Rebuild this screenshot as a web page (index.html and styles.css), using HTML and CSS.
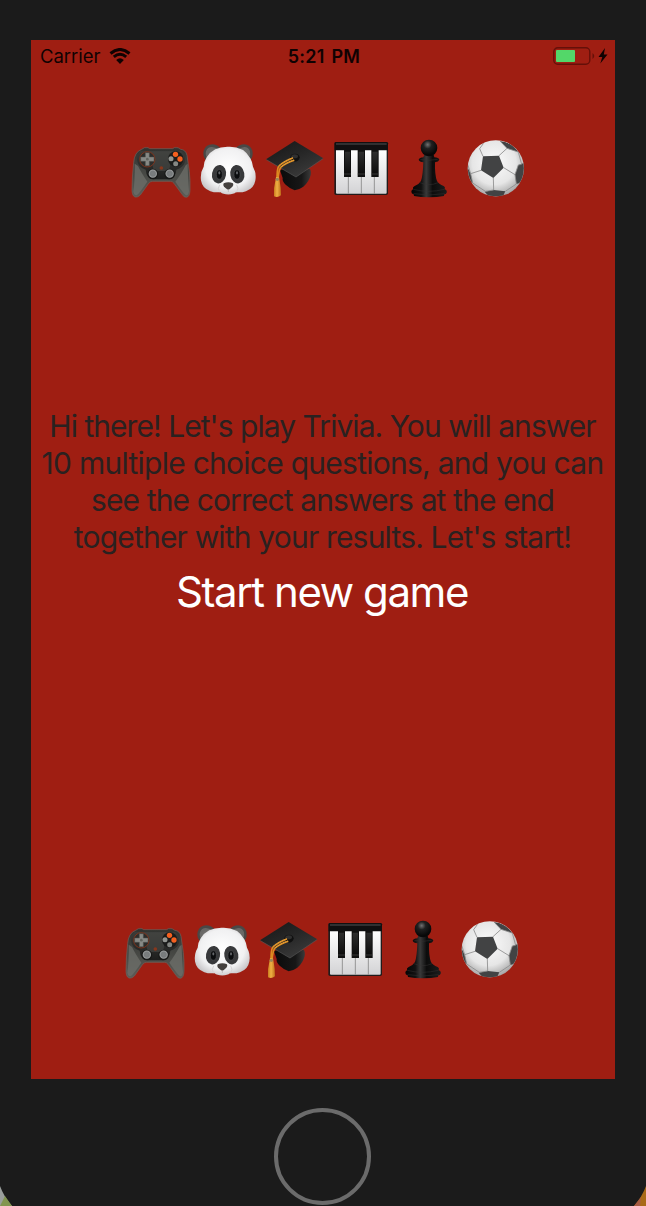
FILE: index.html
```html
<!DOCTYPE html>
<html lang="en">
<head>
<meta charset="utf-8">
<title>Trivia</title>
<link rel="stylesheet" href="styles.css">
</head>
<body>
<svg class="sprites" width="0" height="0" aria-hidden="true">
  <defs>
    <linearGradient id="gBody" x1="0" y1="0" x2="0" y2="1"><stop offset="0" stop-color="#30322f"/><stop offset="1" stop-color="#5c5d58"/></linearGradient>
    <linearGradient id="gPanel" x1="0" y1="0" x2="0" y2="1"><stop offset="0" stop-color="#3b3c39"/><stop offset="1" stop-color="#1d1e1d"/></linearGradient>
    <radialGradient id="gStick"><stop offset="0" stop-color="#7b7f80"/><stop offset=".6" stop-color="#777b7c"/><stop offset="1" stop-color="#a5a8a8"/></radialGradient>
    <radialGradient id="gFace" cx=".5" cy=".45" r=".58"><stop offset="0" stop-color="#fff"/><stop offset=".7" stop-color="#f1f1f2"/><stop offset="1" stop-color="#c8c6c8"/></radialGradient>
    <radialGradient id="gEar"><stop offset="0" stop-color="#8b8986"/><stop offset="1" stop-color="#696866"/></radialGradient>
    <linearGradient id="gCap" x1="0" y1="0" x2=".7" y2="1"><stop offset="0" stop-color="#151515"/><stop offset=".5" stop-color="#262626"/><stop offset="1" stop-color="#3b3b3b"/></linearGradient>
    <linearGradient id="gHat" x1="0" y1="0" x2="1" y2="0"><stop offset="0" stop-color="#0a0a0a"/><stop offset=".7" stop-color="#171717"/><stop offset="1" stop-color="#3a3a3a"/></linearGradient>
    <linearGradient id="gTassel" x1="0" y1="0" x2="1" y2="0"><stop offset="0" stop-color="#c9791a"/><stop offset=".45" stop-color="#efb044"/><stop offset="1" stop-color="#c0701a"/></linearGradient>
    <linearGradient id="gKeys" x1="0" y1="0" x2="0" y2="1"><stop offset="0" stop-color="#fff"/><stop offset="1" stop-color="#d3d3d5"/></linearGradient>
    <linearGradient id="gBlack" x1="0" y1="0" x2="0" y2="1"><stop offset="0" stop-color="#2e2e2e"/><stop offset="1" stop-color="#0d0d0d"/></linearGradient>
    <linearGradient id="gPawn" x1="0" y1="0" x2="1" y2="0"><stop offset="0" stop-color="#050505"/><stop offset=".28" stop-color="#111"/><stop offset=".42" stop-color="#3a3a3a"/><stop offset=".6" stop-color="#0c0c0c"/><stop offset="1" stop-color="#1d1d1d"/></linearGradient>
    <radialGradient id="gHead" cx=".42" cy=".3" r=".6"><stop offset="0" stop-color="#727272"/><stop offset=".4" stop-color="#202020"/><stop offset="1" stop-color="#080808"/></radialGradient>
    <radialGradient id="gBall" cx=".47" cy=".4" r=".6"><stop offset="0" stop-color="#fbfbfb"/><stop offset=".65" stop-color="#e6e6e6"/><stop offset="1" stop-color="#a6a6a6"/></radialGradient>
    <clipPath id="ballClip"><circle cx="287.500" cy="115" r="84"/></clipPath>
  </defs>

  <symbol id="gamepad" viewBox="21 27 201 180">
    <path d="M65 58Q72 51 84 53L89 56H158L163 53Q176 51 182 58Q197 59 201 76L208 125Q211 151 210 181Q209 201 199 202Q191 202 186 193L162 160Q158 154 151 154H98Q91 154 86 160L61 195Q54 203 45 201Q37 198 36 182Q36 142 41 98Q43 66 65 58Z" fill="url(#gBody)" stroke="#6c625c" stroke-width="2"/>
    <path d="M44 101Q45 150 40 185Q43 198 51 195Q59 189 82 155Q63 127 54 108ZM203 101Q204 150 207 184Q205 199 197 195Q190 190 166 155Q181 137 197 106Z" fill="#6c6d68" opacity=".8"/>
    <path d="M62 63H184Q200 77 194 98Q189 112 169 119Q168 143 148 148H100Q79 145 77 119Q53 111 51 89Q51 72 62 63Z" fill="url(#gPanel)"/>
    <path d="M90 64H159L147 123H101Z" fill="#454644" opacity=".65"/>
    <circle cx="82" cy="88" r="23" fill="#2c2d2b" stroke="#8b3519" stroke-width="2.500"/>
    <path d="M76 68H88V81H102V94H88V107H76V94H62V81H76Z" fill="#878985" stroke="#51534f" stroke-width="1.500"/>
    <circle cx="82" cy="87.500" r="4" fill="#62645f"/>
    <circle cx="167" cy="87" r="23" fill="#1b1c1b"/>
    <circle cx="166.500" cy="73" r="8" fill="#f4601f"/><circle cx="180" cy="87" r="8" fill="#f4601f"/>
    <circle cx="153" cy="86.500" r="7.500" fill="#929591"/><circle cx="167" cy="101" r="7.500" fill="#858884"/>
    <circle cx="124" cy="114" r="5.500" fill="#86371d"/>
    <circle cx="98.500" cy="132" r="16" fill="#171817"/><circle cx="149" cy="132" r="16" fill="#171817"/>
    <circle cx="98.500" cy="131" r="12.500" fill="url(#gStick)"/><circle cx="149" cy="131" r="12.500" fill="url(#gStick)"/>
  </symbol>

  <symbol id="panda" viewBox="222 28.5 201 180">
    <path d="M258 93Q247 79 251 64Q256 45 277 44Q291 44 302 56ZM391 93Q401 78 397 63Q391 45 372 44Q358 44 347 56Z" fill="#494846"/>
    <path d="M263 88Q255 77 258 65Q264 51 279 53Q289 54 295 60ZM386 88Q393 77 390 65Q384 51 370 53Q360 54 354 60Z" fill="url(#gEar)"/>
    <path d="M325 52Q370 50 391 86Q397 96 399 112Q410 131 406 153Q402 177 378 185Q364 190 348 188Q341 194 325 195Q308 194 302 188Q285 190 271 185Q247 177 243 153Q240 130 251 112Q252 95 260 83Q281 51 325 52Z" fill="url(#gFace)"/>
    <path d="M299 188Q291 177 299 166M350 188Q358 177 350 166" fill="none" stroke="#d5d3d4" stroke-width="3"/>
    <ellipse cx="297" cy="134" rx="21" ry="28" transform="rotate(10 297 134)" fill="#38393b"/><ellipse cx="352" cy="134" rx="21" ry="28" transform="rotate(-10 352 134)" fill="#38393b"/>
    <ellipse cx="298" cy="135" rx="9" ry="14" fill="#0b0c0e" stroke="#54575a" stroke-width="1.500"/><ellipse cx="351" cy="135" rx="9" ry="14" fill="#0b0c0e" stroke="#54575a" stroke-width="1.500"/>
    <ellipse cx="298" cy="130" rx="3" ry="5" fill="#63666a"/><ellipse cx="351" cy="130" rx="3" ry="5" fill="#63666a"/>
    <path d="M311 161Q325 155 339 161Q342 166 337 172Q328 181 325 181Q322 181 312 172Q308 166 311 161Z" fill="#45413f"/>
    <path d="M325 179V187" stroke="#aaa6a6" stroke-width="2"/>
  </symbol>

  <symbol id="cap" viewBox="3 27 201 180">
    <path d="M60 121Q66 116 80 119L110 126L149 116Q154 121 152 135Q147 156 130 170Q119 178 104 181Q90 176 77 164Q66 154 68 144Z" fill="url(#gHat)"/>
    <path d="M104 33L190 85L108 141L18 88Z" fill="url(#gCap)"/>
    <path d="M19 89L108 141L189 86" fill="none" stroke="#555" stroke-width="2"/>
    <path d="M91 81Q92 71 105 71Q118 72 119 82Q118 94 105 95Q92 93 91 81Z" fill="#101010"/><ellipse cx="104" cy="79" rx="10" ry="6" fill="#303030"/>
    <path d="M99 84Q72 94 56 109Q51 117 51 146M103 91Q76 100 62 112Q57 120 54 145" fill="none" stroke="#dc8a20" stroke-width="5"/>
    <path d="M98 83Q73 92 57 106M102 90Q77 99 63 111" fill="none" stroke="#f5bd53" stroke-width="2" stroke-dasharray="4 2"/>
    <path d="M48 141H57L59 153Q63 172 63 196Q53 204 42 199Q40 174 46 153Z" fill="url(#gTassel)"/>
    <circle cx="52" cy="148" r="5" fill="#9c8657"/>
  </symbol>

  <symbol id="piano" viewBox="204 27 201 180">
    <path d="M227 36H380Q384 36 384 41V190Q384 195 379 195H228Q223 195 223 190V41Q223 36 227 36Z" fill="#211b1b"/>
    <path d="M228 60H380V188Q380 191 377 191H231Q228 191 228 188Z" fill="url(#gKeys)"/>
    <path d="M265 140V191M304 140V191M343 140V191" stroke="#858585" stroke-width="2.500"/>
    <path d="M224 39Q225 36 229 36H378Q383 36 384 40V61H224Z" fill="#101011"/><path d="M228 39H380V45H228Z" fill="#303031"/>
    <path d="M252 60H273V141H252ZM293 60H315V141H293ZM334 60H356V141H334Z" fill="#101010"/>
    <path d="M255 65H270V130H255ZM296 65H312V130H296ZM337 65H353V130H337Z" fill="url(#gBlack)"/>
    <path d="M252 132H273M293 132H315M334 132H356" stroke="#4a4a4a" stroke-width="2"/>
  </symbol>

  <symbol id="pawn" viewBox="-15 27 201 180">
    <path d="M73 74H101L103 82Q117 83 118 89Q116 95 105 97Q104 135 111 153Q116 162 131 168Q137 171 134 178Q142 181 140 188Q138 193 133 193L132 198Q113 202 87 202Q60 202 42 198L41 193Q34 191 34 185Q34 180 39 178Q37 171 44 168Q58 162 63 153Q69 135 70 97Q58 95 56 89Q58 83 70 82Z" fill="url(#gPawn)"/>
    <circle cx="87" cy="54" r="25" fill="url(#gHead)"/>
    <path d="M61 88Q85 94 113 88M60 158Q87 170 114 158M40 178Q85 190 133 178M41 191Q85 199 134 191" fill="none" stroke="#343232" stroke-width="1.500"/>
  </symbol>

  <symbol id="ball" viewBox="186 27 201 180">
    <circle cx="287.500" cy="115" r="84.500" fill="url(#gBall)"/>
    <g clip-path="url(#ballClip)">
      <path d="M249 79L297 77L311 113L280 144L243 121ZM300 34Q332 33 355 66L321 55ZM355 105L372 99V140Q365 158 349 162L345 134ZM201 109L212 131L218 159L201 155ZM254 185L281 180L316 184L308 201H268Z" fill="#424344"/>
      <path d="M203 103L212 131L243 121M212 131L218 159M218 159L256 184L281 180L280 144M249 79L239 56L257 31M297 77L321 55L300 33M321 55L355 66L365 103L355 105L345 134L311 113M345 134L349 162L316 184" fill="none" stroke="#8c8c8c" stroke-width="2.500"/>
    </g>
  </symbol>
</svg>

<main class="phone">
  <div class="screen">
    <header class="status">
      <div class="status-left">
        <span>Carrier</span>
        <svg class="wifi" viewBox="0 0 22 16"><path d="M1.500 5.500Q11-2.500 20.500 5.500M4.800 8.900Q11 3.700 17.200 8.900" fill="none" stroke="#100202" stroke-width="3"/><path d="M7.200 12Q11 8.500 14.800 12L11 15.900Z" fill="#100202"/></svg>
      </div>
      <span class="time">5:21 PM</span>
      <div class="status-right">
        <svg class="battery" viewBox="0 0 55 20"><rect x=".8" y="1.800" width="36" height="16.500" rx="4" fill="none" stroke="#651009" stroke-width="1.400"/><rect x="3" y="4" width="19" height="12" rx="1" fill="#53d769"/><path d="M39.500 7Q43 10 39.500 13Z" fill="#651009"/><path d="M52 2L45.500 11H49.300L47.300 17.500L54.500 8.500H50.800Z" fill="#100202"/></svg>
      </div>
    </header>
    <div class="icons icons-top">
      <svg><use href="#gamepad"/></svg><svg><use href="#panda"/></svg><svg><use href="#cap"/></svg><svg><use href="#piano"/></svg><svg><use href="#pawn"/></svg><svg><use href="#ball"/></svg>
    </div>
    <p class="intro"><span class="l1">Hi there! Let's play Trivia. You will answer</span><span class="l2">10 multiple choice questions, and you can</span><span class="l3">see the correct answers at the end</span><span class="l4">together with your results. Let's start!</span></p>
    <button class="start" type="button">Start new game</button>
    <div class="icons icons-bottom">
      <svg><use href="#gamepad"/></svg><svg><use href="#panda"/></svg><svg><use href="#cap"/></svg><svg><use href="#piano"/></svg><svg><use href="#pawn"/></svg><svg><use href="#ball"/></svg>
    </div>
  </div>
  <div class="home"></div>
  <svg class="corner corner-left" viewBox="0 0 12 20"><path d="M0 0Q4 11 12 20H0Z" fill="#9a9e9c"/><path d="M0 20L5 10L12 20Z" fill="#82954f"/></svg>
  <svg class="corner corner-right" viewBox="0 0 12 20"><path d="M12 0Q8 11 0 20H12Z" fill="#a96a18"/><path d="M0 20L7 11L6 20Z" fill="#a75b43"/></svg>
</main>
</body>
</html>
```
FILE: styles.css
```css
* { box-sizing: border-box; }
body { margin: 0; background: #1b1b1b; font-family: Inter, "Liberation Sans", sans-serif; }
.sprites { position: absolute; }
.phone { position: relative; width: 646px; height: 1206px; padding-top: 40px; overflow: hidden; display: flex; flex-direction: column; align-items: center; background: #1b1b1b; }
.screen { width: 584px; height: 1039px; flex: none; display: flex; flex-direction: column; background: #9f1e12; }
.status { height: 32px; display: grid; grid-template-columns: 1fr auto 1fr; align-items: center; padding: 0 7px 0 9px; color: #100202; font-size: 18.500px; line-height: 32px; }
.status-left { display: flex; align-items: center; gap: 9px; letter-spacing: -.05px; }
.wifi { width: 22px; height: 16px; }
.time { font-weight: 600; font-size: 18px; line-height: 31px; letter-spacing: .25px; word-spacing: 2px; padding-top: 1px; }
.status-right { display: flex; justify-content: flex-end; }
.battery { width: 55px; height: 20px; }
.icons { display: flex; height: 60px; flex: none; }
.icons svg { width: 67px; height: 60px; }
.icons-top { margin: 67px 0 0 96px; }
.icons-bottom { margin: 297px 0 0 90px; }
.intro { margin: 208.500px 0 0; height: 149.500px; display: flex; flex-direction: column; align-items: center; padding-right: 1px; color: #2a2120; font-size: 30px; line-height: 37.200px; white-space: nowrap; }
.intro span { display: block; }
.l1 { letter-spacing: -.950px; }
.l2 { letter-spacing: -.740px; }
.l3 { letter-spacing: -.880px; }
.l4 { letter-spacing: -.820px; }
.start { align-self: center; height: 62px; margin: 4px 0 0; padding: 0 2px 0 0; border: 0; background: none; color: #fff; font: 400 42px/62px Inter, "Liberation Sans", sans-serif; letter-spacing: -1.420px; white-space: nowrap; }
.home { width: 97px; height: 97px; flex: none; margin: 29px 1px 0 0; border: 4.500px solid #6b6b6b; border-radius: 50%; }
.corner { position: absolute; bottom: 0; width: 12px; height: 20px; }
.corner-left { left: 0; }
.corner-right { right: 0; }
```
